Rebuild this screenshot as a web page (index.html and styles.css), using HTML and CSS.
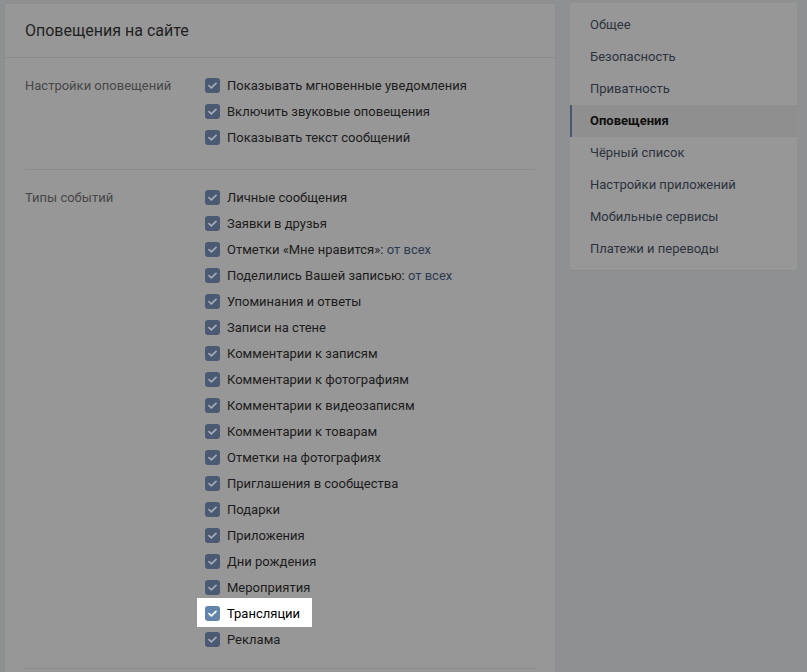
FILE: index.html
```html
<!DOCTYPE html>
<html lang="ru">
<head>
<meta charset="utf-8">
<title>Оповещения</title>
<link rel="stylesheet" href="styles.css">
</head>
<body>
<div class="page">
  <div class="main">
    <div class="header">Оповещения на сайте</div>
    <div class="section">
      <div class="label">Настройки оповещений</div>
      <div class="list">
        <div class="item"><span class="cb"><svg viewBox="0 0 15 15"><path d="M4 7.6l2.4 2.3L11 5.3"/></svg></span>Показывать мгновенные уведомления</div>
        <div class="item"><span class="cb"><svg viewBox="0 0 15 15"><path d="M4 7.6l2.4 2.3L11 5.3"/></svg></span>Включить звуковые оповещения</div>
        <div class="item"><span class="cb"><svg viewBox="0 0 15 15"><path d="M4 7.6l2.4 2.3L11 5.3"/></svg></span>Показывать текст сообщений</div>
      </div>
    </div>
    <div class="sep"></div>
    <div class="section second">
      <div class="label">Типы событий</div>
      <div class="list">
        <div class="item"><span class="cb"><svg viewBox="0 0 15 15"><path d="M4 7.6l2.4 2.3L11 5.3"/></svg></span>Личные сообщения</div>
        <div class="item"><span class="cb"><svg viewBox="0 0 15 15"><path d="M4 7.6l2.4 2.3L11 5.3"/></svg></span>Заявки в друзья</div>
        <div class="item"><span class="cb"><svg viewBox="0 0 15 15"><path d="M4 7.6l2.4 2.3L11 5.3"/></svg></span>Отметки «Мне нравится»:&nbsp;<span class="link">от всех</span></div>
        <div class="item"><span class="cb"><svg viewBox="0 0 15 15"><path d="M4 7.6l2.4 2.3L11 5.3"/></svg></span>Поделились Вашей записью:&nbsp;<span class="link">от всех</span></div>
        <div class="item"><span class="cb"><svg viewBox="0 0 15 15"><path d="M4 7.6l2.4 2.3L11 5.3"/></svg></span>Упоминания и ответы</div>
        <div class="item"><span class="cb"><svg viewBox="0 0 15 15"><path d="M4 7.6l2.4 2.3L11 5.3"/></svg></span>Записи на стене</div>
        <div class="item"><span class="cb"><svg viewBox="0 0 15 15"><path d="M4 7.6l2.4 2.3L11 5.3"/></svg></span>Комментарии к записям</div>
        <div class="item"><span class="cb"><svg viewBox="0 0 15 15"><path d="M4 7.6l2.4 2.3L11 5.3"/></svg></span>Комментарии к фотографиям</div>
        <div class="item"><span class="cb"><svg viewBox="0 0 15 15"><path d="M4 7.6l2.4 2.3L11 5.3"/></svg></span>Комментарии к видеозаписям</div>
        <div class="item"><span class="cb"><svg viewBox="0 0 15 15"><path d="M4 7.6l2.4 2.3L11 5.3"/></svg></span>Комментарии к товарам</div>
        <div class="item"><span class="cb"><svg viewBox="0 0 15 15"><path d="M4 7.6l2.4 2.3L11 5.3"/></svg></span>Отметки на фотографиях</div>
        <div class="item"><span class="cb"><svg viewBox="0 0 15 15"><path d="M4 7.6l2.4 2.3L11 5.3"/></svg></span>Приглашения в сообщества</div>
        <div class="item"><span class="cb"><svg viewBox="0 0 15 15"><path d="M4 7.6l2.4 2.3L11 5.3"/></svg></span>Подарки</div>
        <div class="item"><span class="cb"><svg viewBox="0 0 15 15"><path d="M4 7.6l2.4 2.3L11 5.3"/></svg></span>Приложения</div>
        <div class="item"><span class="cb"><svg viewBox="0 0 15 15"><path d="M4 7.6l2.4 2.3L11 5.3"/></svg></span>Дни рождения</div>
        <div class="item"><span class="cb"><svg viewBox="0 0 15 15"><path d="M4 7.6l2.4 2.3L11 5.3"/></svg></span>Мероприятия</div>
        <div class="item hl"><span class="cb"><svg viewBox="0 0 15 15"><path d="M4 7.6l2.4 2.3L11 5.3"/></svg></span>Трансляции</div>
        <div class="item"><span class="cb"><svg viewBox="0 0 15 15"><path d="M4 7.6l2.4 2.3L11 5.3"/></svg></span>Реклама</div>
      </div>
    </div>
    <div class="sep"></div>
  </div>
  <div class="menu">
    <div class="mi">Общее</div>
    <div class="mi">Безопасность</div>
    <div class="mi">Приватность</div>
    <div class="mi active">Оповещения</div>
    <div class="mi">Чёрный список</div>
    <div class="mi">Настройки приложений</div>
    <div class="mi">Мобильные сервисы</div>
    <div class="mi">Платежи и переводы</div>
  </div>
</div>
</body>
</html>
```
FILE: styles.css
```css
html, body {
  margin: 0;
  padding: 0;
  background: #8f9092;
  font-family: Roboto, "Open Sans", "Liberation Sans", sans-serif;
  font-size: 13px;
  overflow: hidden;
}
.page {
  display: flex;
  align-items: flex-start;
  gap: 14px;
  padding: 3px 0 0 4px;
}
.main {
  width: 550px;
  flex: none;
  background: #979797;
  border: 1px solid #8c8d8e;
  border-bottom: none;
  border-radius: 2px 2px 0 0;
  height: 700px;
}
.header {
  height: 53px;
  line-height: 53px;
  padding-left: 20px;
  font-size: 16px;
  color: #1f1f1f;
  border-bottom: 1px solid #8b8b8b;
}
.section {
  display: flex;
  padding: 14px 20px 19px;
}
.section.second {
  padding-bottom: 16px;
}
.label {
  width: 180px;
  flex: none;
  color: #474747;
  line-height: 26px;
  padding-top: 1px;
}
.list {
  display: flex;
  flex-direction: column;
  align-items: flex-start;
}
.item {
  display: flex;
  align-items: center;
  height: 26px;
  color: #1c1c1c;
  white-space: nowrap;
}
.cb {
  width: 15px;
  height: 15px;
  border-radius: 3px;
  background: #4b5a73;
  margin-right: 7px;
  display: flex;
}
.cb svg {
  width: 15px;
  height: 15px;
}
.cb path {
  fill: none;
  stroke: #a3aab6;
  stroke-width: 1.7;
  stroke-linecap: round;
  stroke-linejoin: round;
}
.link {
  color: #2c3a50;
}
.item.hl {
  background: #ffffff;
  color: #000;
  margin: -2px 0 -1px -8px;
  padding: 2px 12px 1px 8px;
}
.item.hl .cb {
  background: #6384ab;
}
.item.hl .cb path {
  stroke: #ffffff;
}
.sep {
  height: 1px;
  background: #8b8b8b;
  margin: 0 20px;
}
.menu {
  width: 227px;
  flex: none;
  background: #979797;
  border-radius: 2px;
  padding: 6px 0 5px;
  box-shadow: 0 1px 0 #8a8b8c;
}
.mi {
  height: 32px;
  line-height: 32px;
  padding-left: 20px;
  color: #2d333d;
}
.mi.active {
  background: #8f8f8f;
  border-left: 2px solid #4a5877;
  padding-left: 18px;
  color: #0f0f0f;
  font-weight: bold;
}
```
